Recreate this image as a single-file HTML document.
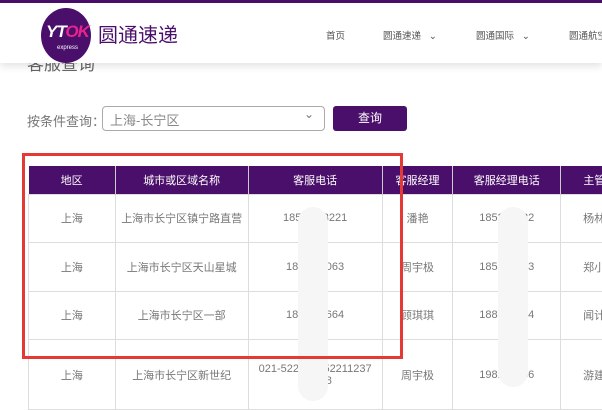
<!DOCTYPE html>
<html><head><meta charset="utf-8"><style>
*{margin:0;padding:0;box-sizing:border-box}
body{width:602px;height:401px;overflow:hidden;background:#fff;position:relative;font-family:"Liberation Sans","Noto Sans CJK SC",sans-serif;color:#666}
.top{position:absolute;left:0;top:0;width:602px;height:3px;background:#4a0f6b}
.hdr{position:absolute;left:0;top:3px;width:602px;height:60px;background:#fff;box-shadow:0 3px 8px rgba(0,0,0,.12);z-index:5}
.logo{position:absolute;left:41px;top:5px;width:50px;height:55px;border-radius:50%;background:#4a0f6b}
.logo b{position:absolute;left:5px;top:14px;color:#fff;font-size:17px;font-style:italic;font-weight:900;letter-spacing:-1px}
.logo b span{color:#e8248c}
.logo i{position:absolute;left:16px;top:37px;color:#fff;font-size:6px;font-style:normal}
.brand{position:absolute;left:98px;top:16px;font-size:20px;color:#4a0f6b}
.nav{position:absolute;top:25px;font-size:9.5px;color:#555;white-space:nowrap}
.title{position:absolute;left:27px;top:50px;font-size:17px;color:#666}
.lbl{position:absolute;left:27px;top:111px;font-size:13px;color:#777}
.sel{position:absolute;left:102px;top:106px;width:223px;height:25px;border:1px solid #aaa;border-radius:4px;font-size:13px;color:#888;padding:3px 0 0 7px}
.sel:after{content:"⌄";position:absolute;right:10px;top:0px;font-size:12px;color:#777}
.btn{position:absolute;left:333px;top:106px;width:74px;height:25px;background:#4a0f6b;border-radius:3px;color:#fff;font-size:12px;text-align:center;line-height:25px}
table{position:absolute;left:28px;top:166px;border-collapse:collapse;font-size:11px;width:600px}
th{background:#4a0f6b;color:#fff;font-weight:normal;height:28px;border-left:1px solid #ccc;text-align:center}
td{border:1px solid #ddd;text-align:center;color:#777;height:48.5px;white-space:nowrap}
.blur{position:absolute;background:#f6f6f6;border-radius:15px;z-index:2}
.red{position:absolute;left:22px;top:153px;width:381px;height:206px;border:3px solid #e53935;z-index:3}
</style></head><body>
<div class="top"></div>
<div class="hdr">
<div class="logo"><b>YT<span>OK</span></b><i>express</i></div>
<div class="brand">圆通速递</div>
<div class="nav" style="left:326px">首页</div>
<div class="nav" style="left:383px">圆通速递 &nbsp;&nbsp;⌄</div>
<div class="nav" style="left:476px">圆通国际 &nbsp;&nbsp;⌄</div>
<div class="nav" style="left:569px">圆通航空</div>
</div>
<div class="title">客服查询</div>
<div class="lbl">按条件查询：</div>
<div class="sel">上海-长宁区</div>
<div class="btn">查询</div>
<table>
<colgroup><col style="width:87px"><col style="width:133px"><col style="width:134px"><col style="width:71px"><col style="width:108px"><col style="width:67px"></colgroup>
<tr><th style="border-left:none">地区</th><th>城市或区域名称</th><th>客服电话</th><th>客服经理</th><th>客服经理电话</th><th>主管</th></tr>
<tr><td>上海</td><td>上海市长宁区镇宁路直营</td><td>185&nbsp;&nbsp;&nbsp;&nbsp;&nbsp;&nbsp;&nbsp;3221</td><td>潘艳</td><td>1852&nbsp;&nbsp;&nbsp;&nbsp;&nbsp;&nbsp;32</td><td>杨林</td></tr>
<tr><td>上海</td><td>上海市长宁区天山星城</td><td>185&nbsp;&nbsp;&nbsp;&nbsp;&nbsp;&nbsp;&nbsp;063</td><td>周宇极</td><td>1852&nbsp;&nbsp;&nbsp;&nbsp;&nbsp;&nbsp;63</td><td>郑小</td></tr>
<tr><td>上海</td><td>上海市长宁区一部</td><td>185&nbsp;&nbsp;&nbsp;&nbsp;&nbsp;&nbsp;&nbsp;664</td><td>顾琪琪</td><td>1886&nbsp;&nbsp;&nbsp;&nbsp;&nbsp;&nbsp;04</td><td>闻计</td></tr>
<tr><td style="height:70px">上海</td><td>上海市长宁区新世纪</td><td>021-5221&nbsp;&nbsp;&nbsp;&nbsp;&nbsp;&nbsp;52211237<br>52&nbsp;&nbsp;&nbsp;&nbsp;&nbsp;8</td><td>周宇极</td><td>1981&nbsp;&nbsp;&nbsp;&nbsp;&nbsp;&nbsp;56</td><td>游建</td></tr>
</table>
<div class="blur" style="left:298px;top:207px;width:30px;height:194px"></div>
<div class="blur" style="left:498px;top:207px;width:30px;height:180px"></div>
<div class="red"></div>
</body></html>
